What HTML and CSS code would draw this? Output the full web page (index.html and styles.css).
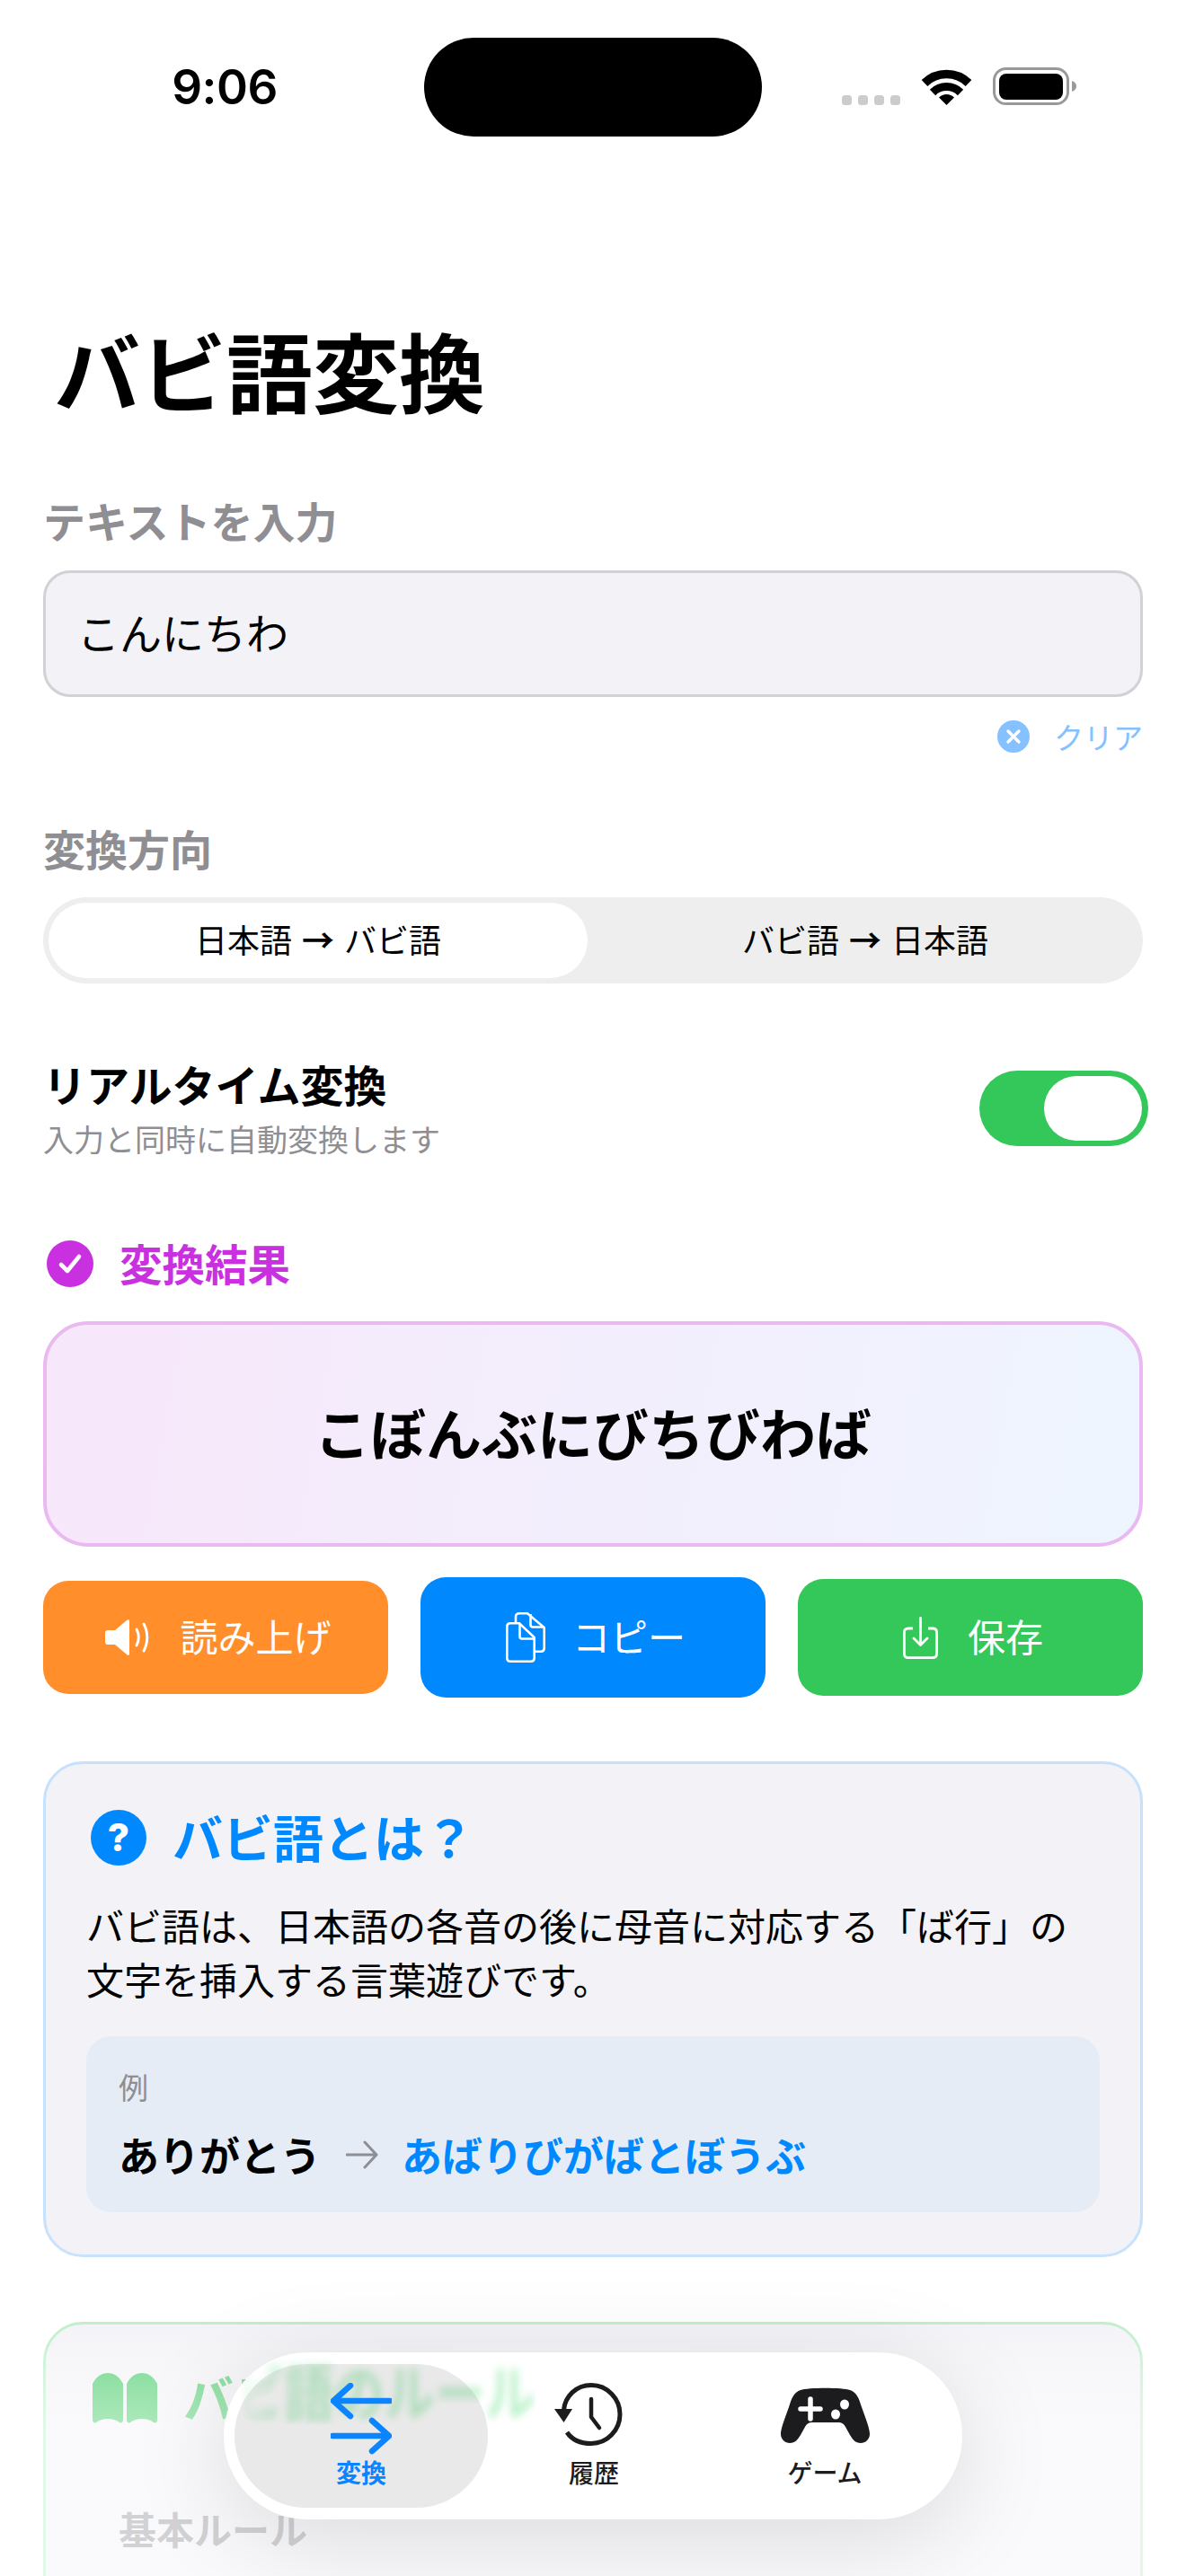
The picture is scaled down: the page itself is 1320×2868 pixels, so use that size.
FILE: index.html
```html
<!DOCTYPE html>
<html lang="ja">
<head>
<meta charset="utf-8">
<title>バビ語変換</title>
<link rel="stylesheet" href="styles.css">
</head>
<body>
<div class="screen">
  <header class="status">
    <span class="time">9:06</span>
    <div class="island"></div>
    <div class="indicators">
      <div class="dots"><i></i><i></i><i></i><i></i></div>
      <svg class="wifi" viewBox="0 0 57 42"><path d="M4 17.5A35 35 0 0 1 53 17.5" fill="none" stroke="#000" stroke-width="9.5"/><path d="M13 28A22 22 0 0 1 44 28" fill="none" stroke="#000" stroke-width="9"/><path d="M28.5 42L20 33.6A12 12 0 0 1 37 33.6Z" fill="#000"/></svg>
      <svg class="battery" viewBox="0 0 93 42"><rect x="1.5" y="1.5" width="82" height="39" rx="13" fill="none" stroke="#999" stroke-width="3"/><rect x="7" y="7" width="71" height="29" rx="8" fill="#000"/><path d="M88 15C91 16 93 18 93 21C93 24 91 26 88 27Z" fill="#999"/></svg>
    </div>
  </header>

  <main class="content">
    <h1 class="title">バビ語変換</h1>

    <div class="label label-first">テキストを入力</div>
    <div class="input">こんにちわ</div>
    <div class="clear">
      <svg class="clear-icon" viewBox="0 0 36 36"><circle cx="18" cy="18" r="18" fill="#85c1ff"/><path d="M12 12L24 24M24 12L12 24" stroke="#fff" stroke-width="3.4" stroke-linecap="round"/></svg>
      <span>クリア</span>
    </div>

    <div class="label label-second">変換方向</div>
    <div class="segment">
      <div class="seg seg-on">日本語 <b>→</b> バビ語</div>
      <div class="seg">バビ語 <b>→</b> 日本語</div>
    </div>

    <div class="realtime">
      <div class="realtime-text">
        <div class="realtime-title">リアルタイム変換</div>
        <div class="realtime-sub">入力と同時に自動変換します</div>
      </div>
      <div class="toggle"><div class="knob"></div></div>
    </div>

    <div class="result-head">
      <svg class="result-icon" viewBox="0 0 52 52"><circle cx="26" cy="26" r="26" fill="#c930e0"/><path d="M16 27L23 34L36 18" fill="none" stroke="#fff" stroke-width="4.6" stroke-linecap="round" stroke-linejoin="round"/></svg>
      <span>変換結果</span>
    </div>
    <div class="result-box">こぼんぶにびちびわば</div>

    <div class="actions">
      <div class="action action-orange">
        <svg class="i-speaker" viewBox="0 0 51 40"><path d="M3 12H11L24 1C26 -.5 27 0 27 2V38C27 40 26 40.5 24 39L11 28H3C1 28 0 27 0 25V15C0 13 1 12 3 12Z" fill="#fff"/><path d="M35 11C38 16 38 24 35 29M43 5C48 14 48 26 43 35" fill="none" stroke="#fff" stroke-width="3" stroke-linecap="round"/></svg>
        <span>読み上げ</span>
      </div>
      <div class="action action-blue">
        <svg class="i-copy" viewBox="0 0 44 56"><path d="M11 11V5C11 2.500 12.500 1.300 15 1.300H24L42.700 17V40C42.700 42.500 41.500 43.700 39 43.700H33" fill="none" stroke="#fff" stroke-width="2.600"/><path d="M27.500 2V14C27.500 15.500 28.500 16.500 30 16.500H42.500" fill="none" stroke="#fff" stroke-width="2.600"/><path d="M1.300 16C1.300 13.500 2.500 12.300 5 12.300H15L31.700 28V51C31.700 53.500 30.500 54.700 28 54.700H5C2.500 54.700 1.300 53.500 1.300 51Z" fill="none" stroke="#fff" stroke-width="2.600"/><path d="M15.500 13V27C15.500 28.500 16.500 29.500 18 29.500H31" fill="none" stroke="#fff" stroke-width="2.600"/></svg>
        <span>コピー</span>
      </div>
      <div class="action action-green">
        <svg class="i-save" viewBox="0 0 39 47"><path d="M11 13H6C3 13 1.400 14.500 1.400 17.500V41C1.400 44 3 45.600 6 45.600H33C36 45.600 37.600 44 37.600 41V17.500C37.600 14.500 36 13 33 13H28" fill="none" stroke="#fff" stroke-width="2.800"/><path d="M19.500 1.500V31M12 24L19.500 31.500L27 24" fill="none" stroke="#fff" stroke-width="2.800" stroke-linecap="round" stroke-linejoin="round"/></svg>
        <span>保存</span>
      </div>
    </div>

    <section class="card card-blue">
      <div class="card-head head-blue">
        <span class="q-icon">?</span>
        <span class="head-text">バビ語とは？</span>
      </div>
      <p class="card-body">バビ語は、日本語の各音の後に母音に対応する「ば行」の<br>文字を挿入する言葉遊びです。</p>
      <div class="example">
        <div class="example-label">例</div>
        <div class="example-row">
          <span class="ex-from">ありがとう</span>
          <svg class="ex-arrow" viewBox="0 0 36 32"><path d="M1 16H34M21 2L34 16L21 30" fill="none" stroke="#8e8e93" stroke-width="3" stroke-linecap="round" stroke-linejoin="round"/></svg>
          <span class="ex-to">あばりびがばとぼうぶ</span>
        </div>
      </div>
    </section>

    <section class="card card-green">
      <div class="card-head head-green">
        <svg class="i-book" viewBox="0 0 72 56"><path d="M0 12C4 4 10 0 17 0C24 0 30 4 34 12V52C34 55 32 56 30 55C26 52 22 51 17 51C12 51 8 52 4 55C2 56 0 55 0 52Z" fill="#34c759"/><path d="M38 12C42 4 48 0 55 0C62 0 68 4 72 12V52C72 55 70 56 68 55C64 52 60 51 55 51C50 51 46 52 42 55C40 56 38 55 38 52Z" fill="#34c759"/></svg>
        <span class="head-text">バビ語のルール</span>
      </div>
      <div class="rule-label">基本ルール</div>
    </section>
  </main>

  <div class="fade"></div>

  <nav class="tabbar">
    <div class="tab tab-on">
      <svg class="i-swap" viewBox="0 0 68 80"><path d="M66 20H3M22 3L3 20L22 37" fill="none" stroke="#0a84ff" stroke-width="6.500" stroke-linecap="round" stroke-linejoin="round"/><path d="M2 59H65M46 42L65 59L46 76" fill="none" stroke="#0a84ff" stroke-width="6.500" stroke-linecap="round" stroke-linejoin="round"/></svg>
      <span>変換</span>
    </div>
    <div class="tab">
      <svg class="i-clock" viewBox="0 0 76 70"><path d="M14 55C20 64 30 67.500 41 67.500C59 67.500 73 52.500 73 35C73 17.500 59 2.500 41 2.500C24 2.500 12 15 10.500 30" fill="none" stroke="#1c1c1e" stroke-width="5"/><path d="M0 29L20 29L10.500 44Z" fill="#1c1c1e"/><path d="M41 18V38L50 50" fill="none" stroke="#1c1c1e" stroke-width="4.500" stroke-linecap="round" stroke-linejoin="round"/></svg>
      <span>履歴</span>
    </div>
    <div class="tab">
      <svg class="i-game" viewBox="0 0 99 62"><path d="M22 3C30 0 69 0 77 3C84 5 87 12 90 22C95 36 99 46 99 52C99 58 94 62 89 62C83 62 80 58 77 53L72 44C70 40 67 39 64 39H35C32 39 29 40 27 44L22 53C19 58 16 62 10 62C5 62 0 58 0 52C0 46 4 36 9 22C12 12 15 5 22 3Z" fill="#1c1c1e"/><path d="M33 13V35M22 24H44" stroke="#fff" stroke-width="5.500" stroke-linecap="round"/><ellipse cx="71" cy="19" rx="5" ry="5.500" fill="#fff"/><ellipse cx="61" cy="30" rx="5" ry="5.500" fill="#fff"/></svg>
      <span>ゲーム</span>
    </div>
  </nav>
</div>
</body>
</html>
```

FILE: styles.css
```css
* { box-sizing: border-box; }
html, body { margin: 0; padding: 0; background: #fff; }
body { font-family: "Noto Sans CJK JP", "Noto Sans", sans-serif; color: #000; }

.screen { position: relative; width: 1320px; height: 2868px; overflow: hidden; background: #fff; }

/* status bar */
.status { position: relative; height: 152px; }
.time { position: absolute; left: 190px; top: 66px; width: 120px; text-align: center; font-family: Inter, sans-serif; font-weight: 600; font-size: 53px; line-height: 62px; letter-spacing: -.5px; }
.island { position: absolute; left: 472px; top: 42px; width: 376px; height: 110px; border-radius: 55px; background: #000; }
.indicators { position: absolute; left: 937px; top: 75px; display: flex; align-items: flex-end; width: 262px; height: 42px; }
.dots { display: flex; gap: 7px; }
.dots i { width: 11px; height: 11px; border-radius: 3.500px; background: #ccc; }
.wifi { width: 57px; height: 42px; margin-left: 23px; }
.battery { width: 93px; height: 42px; margin-left: 23px; }

.content { padding: 0 48px; }

.title { margin: 201px 0 0 12px; font-size: 96px; line-height: 116px; font-weight: 700; }

.label { font-size: 47px; line-height: 56px; font-weight: 700; color: #8e8e93; }
.label-first { margin-top: 82px; }
.label-second { margin-top: 76px; }

.input { margin-top: 28px; height: 141px; border: 3px solid #d1d1d6; border-radius: 30px; background: #f2f2f7; padding-left: 35px; font-size: 47px; line-height: 129px; }

.clear { margin-top: 24px; height: 40px; display: flex; justify-content: flex-end; align-items: center; gap: 27px; color: #85c1ff; font-size: 33px; }
.clear-icon { width: 36px; height: 36px; }

.segment { margin-top: 27px; height: 96px; padding: 6px; border-radius: 48px; background: #eee; display: flex; }
.seg { width: 606px; text-align: center; font-size: 36px; line-height: 80px; word-spacing: 3px; }
.seg-on { width: 600px; background: #fff; border-radius: 42px; margin-right: 6px; }

.realtime { margin-top: 85px; display: flex; justify-content: space-between; align-items: center; height: 112px; }
.realtime-title { font-size: 48px; line-height: 56px; font-weight: 700; margin-top: -5px; }
.realtime-sub { margin-top: 12px; font-size: 34px; line-height: 44px; color: #8e8e93; }
.toggle { width: 188px; height: 84px; margin: -4px -6px 0 0; border-radius: 42px; background: #34c759; padding: 6px 7px 6px 72px; }
.knob { width: 109px; height: 72px; border-radius: 36px; background: #fff; }

.result-head { margin-top: 87px; height: 56px; display: flex; align-items: center; gap: 29px; padding-left: 4px; color: #c930e0; font-size: 47.500px; line-height: 52px; font-weight: 700; }
.result-head span { margin-bottom: 3px; }
.result-icon { width: 52px; height: 52px; }

.result-box { margin-top: 36px; height: 251px; border: 4px solid #ebb9f1; border-radius: 50px; background: linear-gradient(100deg, #f7e7fa, #eef5fe); text-align: center; font-size: 62px; line-height: 239px; font-weight: 700; }

.actions { margin-top: 34px; height: 134px; display: flex; align-items: center; gap: 36px; }
.action { width: 384px; display: flex; align-items: center; justify-content: center; color: #fff; font-size: 42px; line-height: 52px; border-radius: 28px; padding-left: 6px; }
.action span { margin-bottom: 4px; }
.action-orange { height: 126px; background: #ff8e2b; gap: 32px; }
.action-blue { height: 134px; background: #0088ff; gap: 30px; }
.action-green { height: 130px; background: #34c759; gap: 33px; }
.i-speaker { width: 51px; height: 40px; }
.i-copy { width: 44px; height: 56px; }
.i-save { width: 39px; height: 47px; }

.card { margin-top: 71px; border: 3px solid #c6e1fb; border-radius: 44px; background: #f2f2f7; padding: 51px 45px 47px; }
.card-head { display: flex; align-items: center; font-size: 56px; line-height: 56px; font-weight: 700; height: 62px; }
.head-text { margin-bottom: 5px; }
.head-blue { color: #0088ff; padding-left: 5px; gap: 29px; }
.q-icon { width: 62px; height: 62px; border-radius: 50%; background: #0088ff; color: #fff; font-size: 42px; line-height: 62px; text-align: center; font-family: Inter, sans-serif; font-weight: 800; }
.card-body { margin: 36px 0 0; font-size: 42px; line-height: 60px; }

.example { margin-top: 34px; height: 196px; border-radius: 28px; background: #e5ecf6; padding: 36px 36px 0; }
.example-label { font-size: 33px; line-height: 40px; color: #8e8e93; }
.example-row { margin-top: 24px; display: flex; align-items: center; height: 64px; font-size: 45px; font-weight: 700; line-height: 62px; }
.ex-arrow { width: 36px; height: 32px; margin: 0 26px 0 28px; }
.ex-to { color: #0088ff; }

.card-green { margin-top: 72px; border-color: #b5ecc3; }
.head-green { color: #34c759; padding-left: 7px; gap: 29px; }
.i-book { width: 72px; height: 56px; }
.rule-label { margin-top: 89px; padding-left: 36px; height: 160px; font-size: 42px; line-height: 50px; font-weight: 700; color: #8e8e93; }

/* fade over the content behind the tab bar */
.fade { position: absolute; left: 0; right: 0; bottom: 0; height: 400px; background: linear-gradient(to bottom, rgba(255,255,255,0), rgba(255,255,255,.15) 29%, rgba(255,255,255,.43) 43%, rgba(255,255,255,.6) 58%, rgba(255,255,255,.6)); }

/* floating tab bar */
.tabbar { position: absolute; left: 249px; top: 2619px; width: 822px; height: 186px; border-radius: 93px; padding: 13px 12px; display: flex; background: rgba(255,255,255,.95); overflow: hidden; }
/* refracted, blurred trace of the heading passing under the glass */
.tabbar::before { content: "バビ語のルール"; position: absolute; left: -45px; top: 8px; font-size: 56px; line-height: 66px; font-weight: 700; color: #bdf2cc; white-space: nowrap; transform: scaleY(1.2); filter: blur(4px); -webkit-mask-image: linear-gradient(to right, transparent 65px, #000 105px); mask-image: linear-gradient(to right, transparent 65px, #000 105px); pointer-events: none; }
.tab { position: relative; width: 236px; height: 160px; display: flex; flex-direction: column; align-items: center; justify-content: flex-end; padding-bottom: 23px; border-radius: 80px; font-size: 28px; line-height: 34px; color: #1c1c1e; font-weight: 500; }
.tab span { margin-top: 4px; }
.tab:nth-child(3) { width: 278px; }
.tab-on { width: 282px; color: #0a84ff; background: rgba(120,120,120,.16); font-weight: 700; }
.i-swap { width: 68px; height: 80px; margin-bottom: -2px; }
.i-clock { width: 76px; height: 70px; margin: 0 12px 8px 0; }
.i-game { width: 99px; height: 62px; margin-bottom: 11px; }
.screen::after { content: ""; position: absolute; left: 249px; top: 2619px; width: 822px; height: 186px; border-radius: 93px; box-shadow: 0 20px 110px rgba(0,0,0,.13); pointer-events: none; }
```
